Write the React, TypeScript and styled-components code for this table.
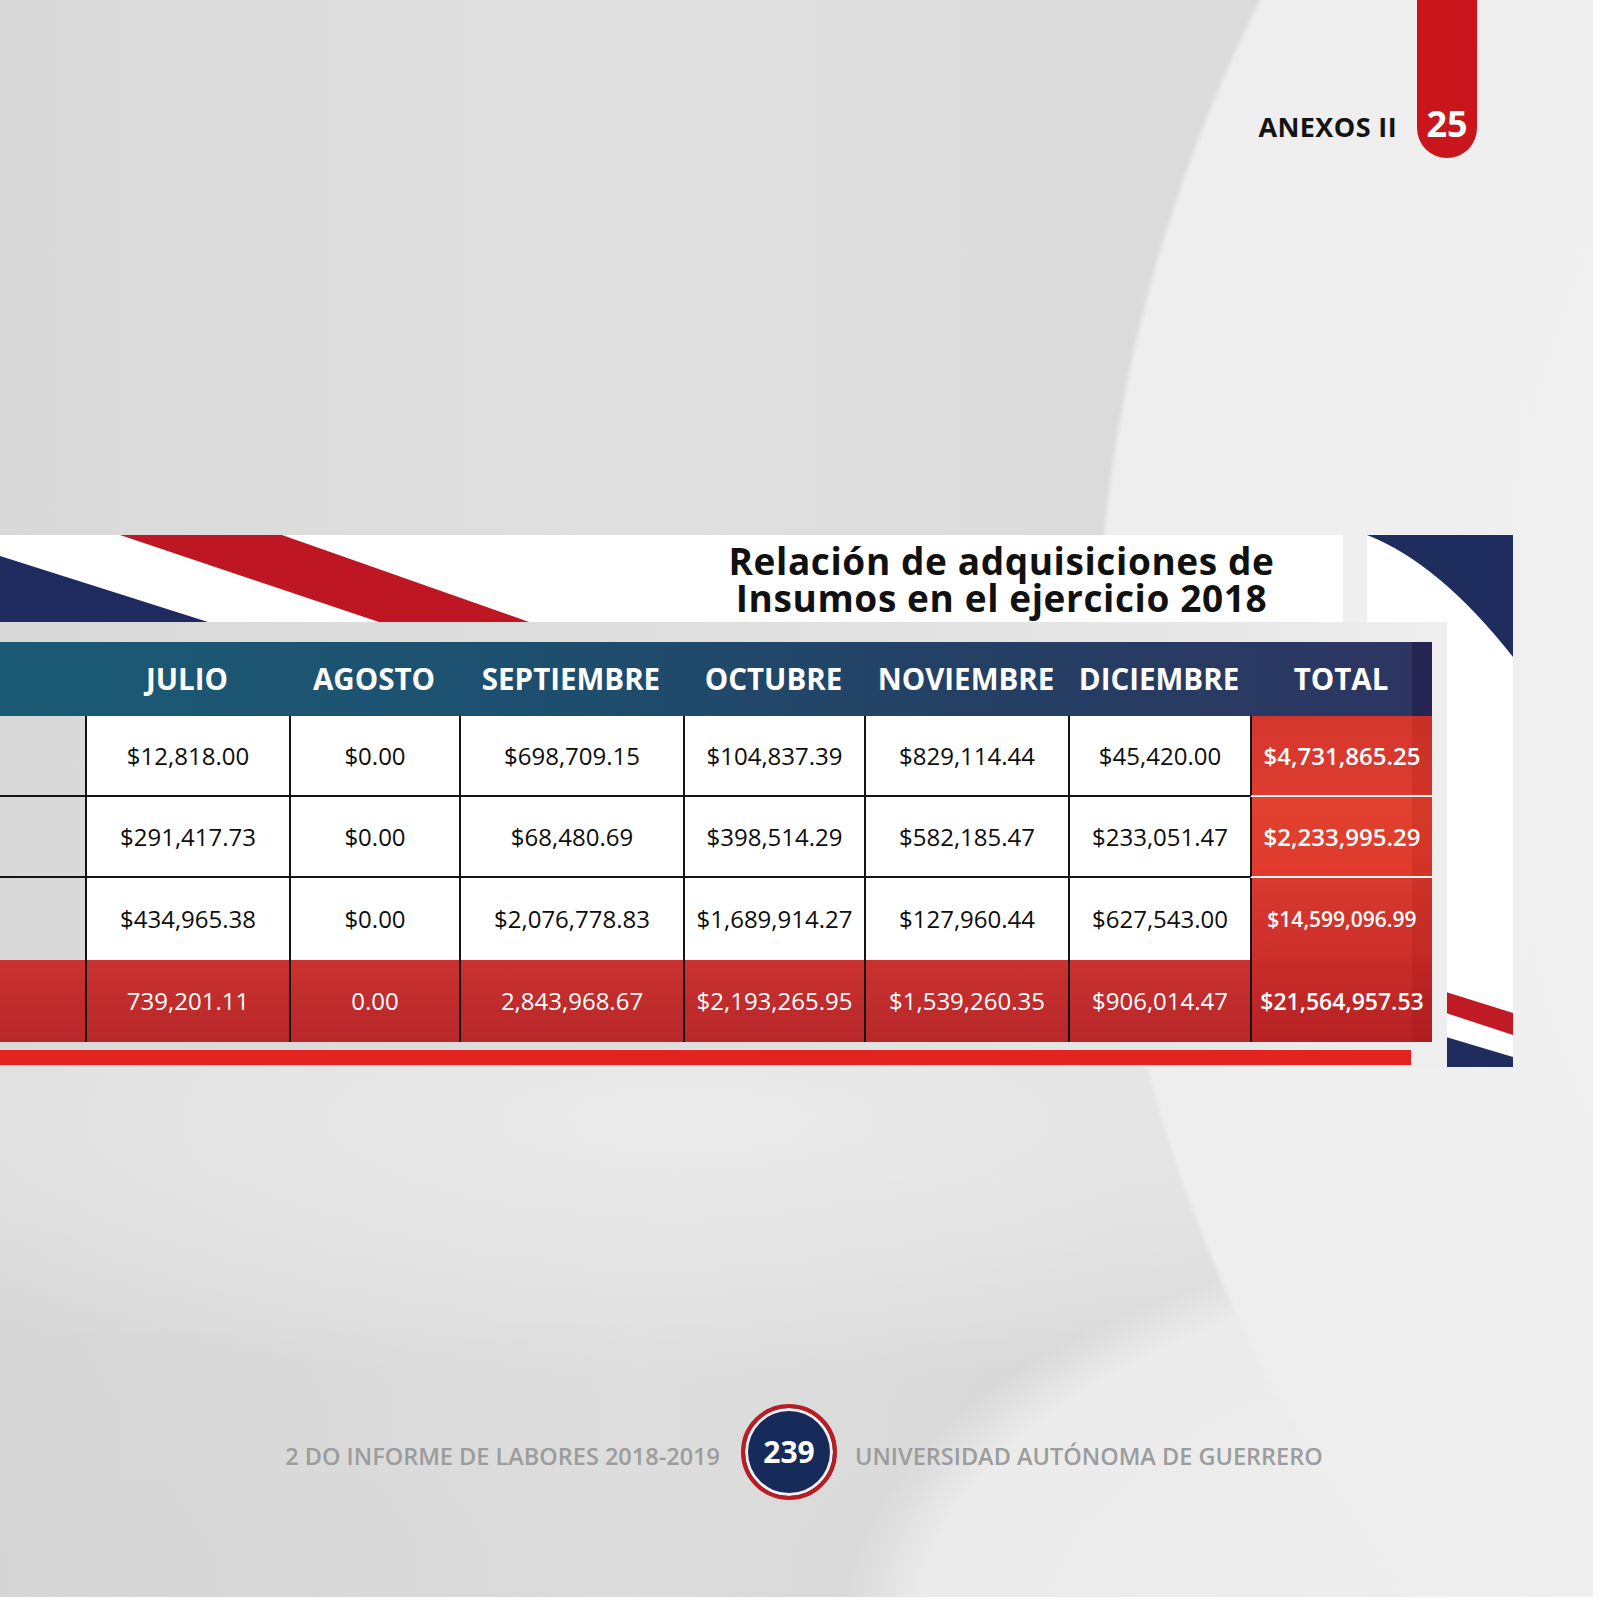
import React from 'react';
import styled, { createGlobalStyle } from 'styled-components';

const Global = createGlobalStyle`
  html, body { margin: 0; padding: 0; background: #ffffff; }
  body { font-family: "Open Sans", "Liberation Sans", sans-serif; }
  * { box-sizing: border-box; }
`;

const Page = styled.div`
  width: 1593px;
  height: 1597px;
  overflow: hidden;
  display: flex;
  flex-direction: column;
  background:
    radial-gradient(circle at 2600px 682px, #f3f3f3 0, #eeeeee 1500px, rgba(238,238,238,0) 1506px),
    radial-gradient(ellipse 760px 420px at 1600px 1640px, #eeeeee 0, #ebebeb 90%, rgba(235,235,235,0) 100%),
    radial-gradient(ellipse 1100px 260px at 700px 1120px, rgba(236,236,236,0.9) 0, rgba(232,232,232,0.6) 60%, rgba(232,232,232,0) 100%),
    linear-gradient(180deg, rgba(0,0,0,0) 60%, rgba(0,0,0,0.02) 100%),
    linear-gradient(90deg, #d9d9d9 0%, #e0e0e0 40%, #dbdbdb 70%, #e0e0e0 100%);
`;

/* ---------- top corner ---------- */
const TopBar = styled.header`
  height: 158px;
  display: flex;
  justify-content: flex-end;
  align-items: flex-end;
  gap: 20px;
  padding-right: 116px;
`;

const SectionLabel = styled.div`
  font-size: 27px;
  font-weight: 700;
  line-height: 1;
  color: #141414;
  letter-spacing: 0.4px;
  margin-bottom: 18px;
`;

const ChapterTab = styled.div`
  width: 60px;
  height: 158px;
  background: #c9161c;
  border-radius: 0 0 30px 30px;
  display: flex;
  align-items: flex-end;
  justify-content: center;
  padding-bottom: 16px;
  color: #ffffff;
  font-size: 36px;
  font-weight: 700;
  line-height: 1;
`;

/* ---------- board with title + table ---------- */
const Board = styled.section`
  margin-top: 377px;
  display: grid;
  grid-template-columns: 1343px 24px 80px 66px;
  grid-template-rows: 87px 445px;
`;

const TitleBand = styled.div`
  grid-column: 1;
  grid-row: 1;
  background: #ffffff;
  display: grid;
  grid-template-columns: 660px 1fr;
  overflow: hidden;
`;

const Title = styled.h1`
  margin: 0;
  padding-top: 7px;
  display: flex;
  flex-direction: column;
  align-items: center;
  font-size: 37px;
  font-weight: 700;
  letter-spacing: 0.6px;
  color: #111111;
`;

const TitleLine = styled.span`
  display: block;
  height: 37px;
  line-height: 37px;
  white-space: nowrap;
`;

const CornerDeco = styled.div`
  grid-column: 3 / 5;
  grid-row: 1 / 3;
  background: #ffffff;
  display: flex;
`;

const Panel = styled.div`
  grid-column: 1 / 4;
  grid-row: 2;
  z-index: 1;
  background: linear-gradient(90deg, #d9d9d9 0%, #dedede 45%, #e6e6e6 80%, #eeeeee 100%);
  padding-top: 20px;
  display: flex;
  flex-direction: column;
`;

const Table = styled.div`
  width: 1432px;
  display: flex;
  flex-direction: column;
`;

const cols = '85px 204px 170px 224px 181px 204px 182px 182px';

const HeadRow = styled.div`
  display: grid;
  grid-template-columns: ${cols};
  height: 74px;
  background: linear-gradient(90deg, #1b5a74 0%, #1d5070 35%, #243f63 70%, #2d3562 100%);
  box-shadow: inset -20px 0 0 rgba(20, 10, 50, 0.35);
`;

const HeadCell = styled.div`
  display: flex;
  align-items: center;
  justify-content: center;
  color: #ffffff;
  font-size: 29.5px;
  font-weight: 700;
  line-height: 1;
  white-space: nowrap;
`;

const BodyRow = styled.div<{ $h: number }>`
  display: grid;
  grid-template-columns: ${cols};
  height: ${(p) => p.$h}px;
`;

type Kind = 'blank' | 'value' | 'total' | 'sum';

const totalBg: Record<number, string> = {
  0: 'linear-gradient(180deg, #d5362c 0%, #dd3b2f 100%)',
  1: 'linear-gradient(180deg, #e2422f 0%, #e03a2c 100%)',
  2: 'linear-gradient(180deg, #d9392e 0%, #cb2f29 100%)',
  3: 'linear-gradient(180deg, #c82c28 0%, #b72224 100%)',
};

const Cell = styled.div<{ $kind: Kind; $row: number; $line: boolean; $first?: boolean; $size?: number }>`
  display: flex;
  align-items: center;
  justify-content: center;
  white-space: nowrap;
  line-height: 1;
  font-size: ${(p) => p.$size ?? 24}px;
  border-left: ${(p) => (p.$first ? 'none' : '2px solid #151515')};
  border-bottom: ${(p) =>
    p.$line ? (p.$kind === 'total' ? '2px solid #f4f4f4' : '2px solid #151515') : 'none'};
  background: ${(p) =>
    p.$kind === 'value'
      ? '#ffffff'
      : p.$kind === 'blank'
      ? 'transparent'
      : p.$kind === 'sum'
      ? 'linear-gradient(180deg, #c9322f 0%, #b8272a 100%)'
      : totalBg[p.$row]};
  color: ${(p) => (p.$kind === 'value' ? '#0d0d0d' : '#ffffff')};
  font-weight: ${(p) => (p.$kind === 'total' ? 600 : 400)};
  box-shadow: ${(p) => (p.$kind === 'total' ? 'inset -20px 0 0 rgba(120, 0, 0, 0.12)' : 'none')};
`;

const RedRule = styled.div`
  margin-top: 8px;
  width: 1411px;
  height: 15px;
  background: #e3231f;
`;

/* ---------- footer ---------- */
const Footer = styled.footer`
  margin-top: 337px;
  height: 96px;
  display: grid;
  grid-template-columns: 1fr 96px 1fr;
  align-items: center;
  padding-right: 15px;
`;

const FooterText = styled.div<{ $side: 'left' | 'right' }>`
  font-size: 23.5px;
  font-weight: 600;
  color: #9c9c9c;
  line-height: 1;
  white-space: nowrap;
  padding-top: 10px;
  text-align: ${(p) => (p.$side === 'left' ? 'right' : 'left')};
  padding-${(p) => (p.$side === 'left' ? 'right' : 'left')}: ${(p) => (p.$side === 'left' ? 21 : 18)}px;
`;

const PageBadge = styled.div`
  width: 96px;
  height: 96px;
  border-radius: 50%;
  border: 4px solid #b81d23;
  background: #172b5b;
  box-shadow: inset 0 0 0 3px #efefef;
  display: flex;
  align-items: center;
  justify-content: center;
  color: #ffffff;
  font-size: 30px;
  font-weight: 700;
  line-height: 1;
`;

const months = ['JULIO', 'AGOSTO', 'SEPTIEMBRE', 'OCTUBRE', 'NOVIEMBRE', 'DICIEMBRE', 'TOTAL'];

const rows: { values: string[]; total: string; size?: number }[] = [
  {
    values: ['$12,818.00', '$0.00', '$698,709.15', '$104,837.39', '$829,114.44', '$45,420.00'],
    total: '$4,731,865.25',
  },
  {
    values: ['$291,417.73', '$0.00', '$68,480.69', '$398,514.29', '$582,185.47', '$233,051.47'],
    total: '$2,233,995.29',
  },
  {
    values: ['$434,965.38', '$0.00', '$2,076,778.83', '$1,689,914.27', '$127,960.44', '$627,543.00'],
    total: '$14,599,096.99',
    size: 21,
  },
];

const sums = ['739,201.11', '0.00', '2,843,968.67', '$2,193,265.95', '$1,539,260.35', '$906,014.47'];

const TitleFlag = () => (
  <svg width="660" height="87" viewBox="0 0 660 87">
    <polygon points="0,21 208,87 0,87" fill="#1f2b5e" />
    <polygon points="120,0 282,0 529,87 379,87" fill="#be1622" />
  </svg>
);

const CornerArt = () => (
  <svg width="146" height="532" viewBox="0 0 146 532">
    <path d="M0 0 H146 V122 Q72 28 0 0 Z" fill="#1f2d5e" />
    <polygon points="79,457 146,478 146,500 79,478" fill="#c01a24" />
    <polygon points="79,502 146,522 146,532 79,532" fill="#1f2d5e" />
  </svg>
);

export default function App() {
  const heights = [81, 81, 82];
  return (
    <>
      <Global />
      <Page>
        <TopBar>
          <SectionLabel>ANEXOS II</SectionLabel>
          <ChapterTab>25</ChapterTab>
        </TopBar>

        <Board>
          <TitleBand>
            <TitleFlag />
            <Title>
              <TitleLine>Relación de adquisiciones de</TitleLine>
              <TitleLine>Insumos en el ejercicio 2018</TitleLine>
            </Title>
          </TitleBand>

          <CornerDeco>
            <CornerArt />
          </CornerDeco>

          <Panel>
            <Table>
              <HeadRow>
                <HeadCell />
                {months.map((m) => (
                  <HeadCell key={m}>{m}</HeadCell>
                ))}
              </HeadRow>
              {rows.map((r, i) => (
                <BodyRow key={i} $h={heights[i]}>
                  <Cell $kind="blank" $row={i} $line={i < 2} $first />
                  {r.values.map((v, j) => (
                    <Cell key={j} $kind="value" $row={i} $line={i < 2}>
                      {v}
                    </Cell>
                  ))}
                  <Cell $kind="total" $row={i} $line={i < 2} $size={r.size}>
                    {r.total}
                  </Cell>
                </BodyRow>
              ))}
              <BodyRow $h={82}>
                <Cell $kind="sum" $row={3} $line={false} $first />
                {sums.map((v, j) => (
                  <Cell key={j} $kind="sum" $row={3} $line={false}>
                    {v}
                  </Cell>
                ))}
                <Cell $kind="total" $row={3} $line={false} $size={23}>
                  $21,564,957.53
                </Cell>
              </BodyRow>
            </Table>
            <RedRule />
          </Panel>
        </Board>

        <Footer>
          <FooterText $side="left">2 DO INFORME DE LABORES 2018-2019</FooterText>
          <PageBadge>239</PageBadge>
          <FooterText $side="right">UNIVERSIDAD AUTÓNOMA DE GUERRERO</FooterText>
        </Footer>
      </Page>
    </>
  );
}
